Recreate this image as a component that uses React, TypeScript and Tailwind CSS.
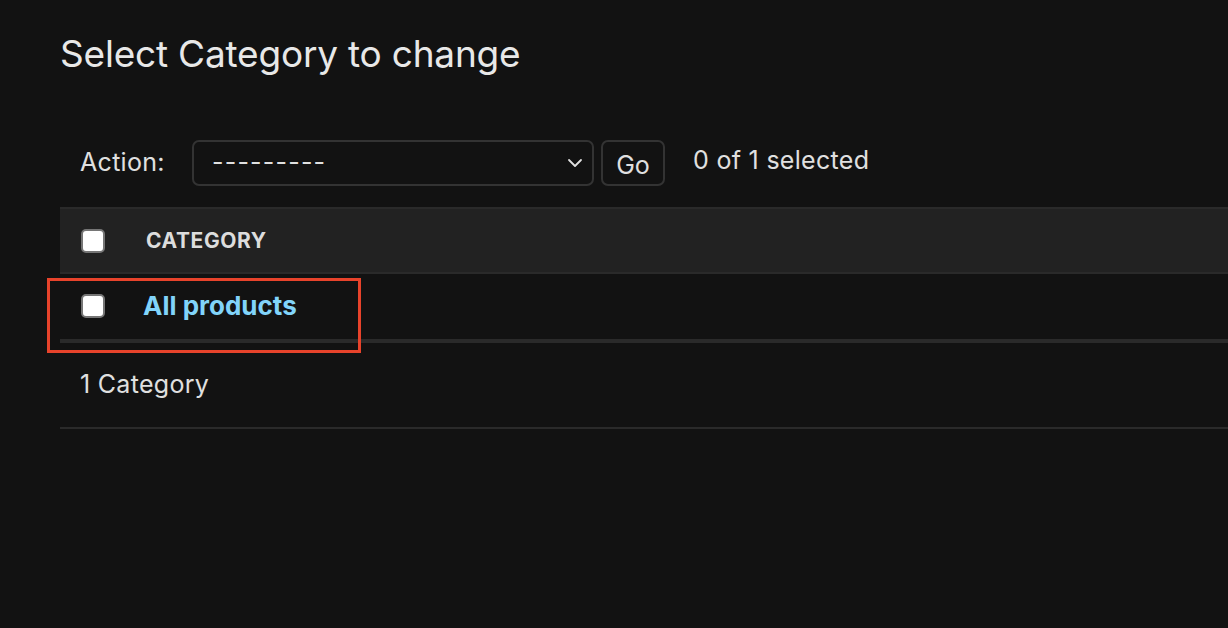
import { ChevronDown } from 'lucide-react';

function Box() {
  return (
    <span className="block w-6 h-6 rounded-[5px] bg-white border-2 border-[#767676]" />
  );
}

export default function App() {
  return (
    <div className="min-h-[628px] w-full overflow-hidden bg-[#121212] text-[#e6e6e6] font-['Inter',sans-serif]">
      <div className="pl-[60px] pt-[30px]">
        <h1 className="text-[37px] leading-[48px] font-normal text-[#e8e8e8] tracking-[-0.2px]">
          Select Category to change
        </h1>

        {/* actions */}
        <div className="mt-[62px] flex items-center pl-5 h-[46px]">
          <label className="text-[25px] tracking-[0.3px] text-[#e0e0e0] w-[112px]">Action:</label>
          <div className="relative w-[402px] h-[46px]">
            <div className="h-full rounded-[7px] border-2 border-[#333] flex items-center pl-[18px] text-[25px] tracking-[1.2px] text-[#e0e0e0]">
              ---------
            </div>
            <ChevronDown className="absolute right-[7px] top-1/2 -translate-y-1/2 w-6 h-6 text-[#e0e0e0]" strokeWidth={1.8} />
          </div>
          <button className="ml-[7px] w-16 h-[46px] rounded-[7px] border-2 border-[#333] text-[25px] text-[#e0e0e0] flex items-center justify-center pt-[6px]">
            Go
          </button>
          <span className="ml-7 text-[25px] tracking-[0.3px] text-[#e0e0e0] -mt-1">0 of 1 selected</span>
        </div>

        {/* table */}
        <div className="mt-[21px]">
          <div className="h-[67px] bg-[#222] border-t-2 border-b-2 border-[#2a2a2a] flex items-center">
            <div className="pl-[21px] w-[86px]"><Box /></div>
            <span className="text-[21px] font-bold tracking-[0.6px] text-[#ddd]">CATEGORY</span>
          </div>
          <div className="relative h-[69px] border-b-4 border-[#2a2a2a] flex items-center">
            <div className="pl-[21px] w-[83px] -mt-[2px]"><Box /></div>
            <a className="text-[26px] font-bold text-[#81d4fa] -mt-[2px]">All products</a>
            <div className="absolute -left-[13px] top-[4px] w-[314px] h-[75px] border-[3px] border-[#e8432b]" />
          </div>
          <div className="h-[86px] border-b-2 border-[#2a2a2a] flex items-center pl-5">
            <span className="text-[25px] tracking-[0.3px] text-[#e0e0e0]">1 Category</span>
          </div>
        </div>
      </div>
    </div>
  );
}
